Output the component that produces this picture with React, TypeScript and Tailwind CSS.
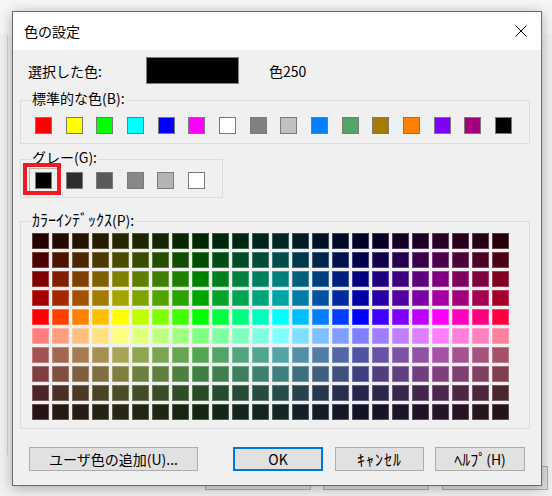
import React from 'react';

const standardColors = [
  '#ff0000', '#ffff00', '#00ff00', '#00ffff', '#0000ff', '#ff00ff', '#ffffff', '#808080',
  '#c0c0c0', '#007fff', '#52a567', '#a57c00', '#ff7f00', '#7f00ff', '#a5007c', '#000000',
];

const grayColors = ['#000000', '#2e2e2e', '#5b5b5b', '#878787', '#b4b4b4', '#ffffff'];

// AutoCAD colour index 10-249: 24 hues, 10 shades (dark -> full -> pastel -> dark)
const hueRgb = (i: number): number[] => {
  const sector = Math.floor(i / 4);
  const frac = (i % 4) / 4;
  const up = Math.floor(255 * frac);
  const down = Math.floor(255 * (1 - frac));
  switch (sector) {
    case 0: return [255, up, 0];
    case 1: return [down, 255, 0];
    case 2: return [0, 255, up];
    case 3: return [0, down, 255];
    case 4: return [up, 0, 255];
    default: return [255, 0, down];
  }
};

const shades: { pastel: boolean; k: number }[] = [
  { pastel: false, k: 38 / 255 },
  { pastel: false, k: 76 / 255 },
  { pastel: false, k: 127 / 255 },
  { pastel: false, k: 165 / 255 },
  { pastel: false, k: 1 },
  { pastel: true, k: 1 },
  { pastel: true, k: 165 / 255 },
  { pastel: true, k: 127 / 255 },
  { pastel: true, k: 76 / 255 },
  { pastel: true, k: 38 / 255 },
];

const indexColors: string[] = shades.flatMap(({ pastel, k }) =>
  Array.from({ length: 24 }, (_, i) => {
    const rgb = hueRgb(i).map(c => (pastel ? 127 + Math.round((c * 128) / 255) : c));
    const [r, g, b] = rgb.map(c => Math.round(c * k));
    return `rgb(${r},${g},${b})`;
  })
);

const Swatch: React.FC<{ color: string }> = ({ color }) => (
  <div className="w-[17px] h-[17px] border border-[#7a7a7a]" style={{ backgroundColor: color }} />
);

const GroupBox: React.FC<{ label: React.ReactNode; className?: string; children: React.ReactNode }> = ({ label, className, children }) => (
  <fieldset className={`border border-[#dcdcdc] ${className ?? ''}`}>
    <legend className="ml-[10px] px-[1px] leading-[16px]">
      <span className="relative -top-[2px]">{label}</span>
    </legend>
    {children}
  </fieldset>
);

const Button: React.FC<{ label: React.ReactNode; width: string; isDefault?: boolean }> = ({ label, width, isDefault }) => (
  <button
    className={`${width} h-[24px] bg-[#e1e1e1] flex items-center justify-center leading-[16px] ${
      isDefault ? 'border-2 border-[#0078d7]' : 'border border-[#adadad]'
    }`}
  >
    {label}
  </button>
);

export default function App() {
  return (
    <div className="relative w-[552px] h-[496px] overflow-hidden bg-[#f0f0f0] text-[14px] text-black [font-family:'Noto_Sans_CJK_JP','Noto_Sans',sans-serif]">
      {/* window behind the dialog */}
      <div className="absolute left-0 top-0 w-full h-[34px] bg-[#f6f6f6]" />
      <div className="absolute left-[7px] top-[35px] w-px h-[420px] bg-[#d4d4d4]" />
      <div className="absolute left-[205px] top-[466px] w-[106px] h-[24px] bg-[#e1e1e1] border border-[#adadad]" />
      <div className="absolute left-[323px] top-[466px] w-[106px] h-[24px] bg-[#e1e1e1] border border-[#adadad]" />
      <div className="absolute left-[442px] top-[466px] w-[106px] h-[24px] bg-[#e1e1e1] border border-[#adadad]" />

      {/* dialog */}
      <div className="absolute left-[12px] top-[11px] w-[530px] h-[475px] flex flex-col bg-[#f0f0f0] border border-[#6b6b6b] shadow-[0_2px_12px_rgba(0,0,0,0.3)]">
        <div className="h-[38px] shrink-0 bg-white flex items-center justify-between pl-[11px] pr-[14px]">
          <span className="leading-[16px]">色の設定</span>
          <svg width="12" height="12" viewBox="0 0 12 12">
            <path d="M0.5 0.5 L11.5 11.5 M11.5 0.5 L0.5 11.5" stroke="#000" strokeWidth="1" />
          </svg>
        </div>

        <div className="flex flex-col pl-[7px] pt-[7px]">
          <div className="flex items-center h-[27px]">
            <span className="ml-[8px] w-[118px] leading-[16px]">選択した色:</span>
            <div className="w-[93px] h-[27px] bg-black border border-[#808080]" />
            <span className="ml-[30px] leading-[16px]">色250</span>
          </div>

          <GroupBox label="標準的な色(B):" className="mt-[8px] w-[510px]">
            <div className="w-[477px] ml-[14px] mt-[9px] mb-[9px] flex justify-between">
              {standardColors.map((c, i) => <Swatch key={i} color={c} />)}
            </div>
          </GroupBox>

          <GroupBox label="グレー(G):" className="mt-[7px] w-[203px]">
            <div className="w-[170px] ml-[14px] mt-[5px] mb-[8px] flex justify-between">
              {grayColors.map((c, i) =>
                i === 0 ? (
                  <div key={i} className="relative">
                    <div className="absolute -left-[6px] -top-[4px] w-[29px] h-[25px] border border-[#b4b4b4]" />
                    <Swatch color={c} />
                    <div className="absolute -left-[12px] -top-[9px] w-[38px] h-[32px] border-4 border-[#ed1c24]" />
                  </div>
                ) : (
                  <Swatch key={i} color={c} />
                )
              )}
            </div>
          </GroupBox>

          <GroupBox
            label={<><span className="text-[16px] leading-[16px]">ｶﾗｰｲﾝﾃﾞｯｸｽ</span>(P):</>}
            className="mt-[15px] w-[510px]"
          >
            <div className="ml-[11px] mt-[3px] mb-[8px] grid grid-cols-[repeat(24,17px)] auto-rows-[16px] gap-[3px]">
              {indexColors.map((c, i) => (
                <div key={i} className="border border-white/25" style={{ backgroundColor: c }} />
              ))}
            </div>
          </GroupBox>

          <div className="flex mt-[18px] ml-[9px]">
            <Button label="ユーザ色の追加(U)..." width="w-[169px]" />
            <div className="ml-[35px]"><Button label="OK" width="w-[90px]" isDefault /></div>
            <div className="ml-[12px]">
              <Button label={<span className="text-[16px] tracking-[1px]">ｷｬﾝｾﾙ</span>} width="w-[89px]" />
            </div>
            <div className="ml-[11px]">
              <Button label={<><span className="text-[16px]">ﾍﾙﾌﾟ</span>(H)</>} width="w-[90px]" />
            </div>
          </div>
        </div>
      </div>
    </div>
  );
}
